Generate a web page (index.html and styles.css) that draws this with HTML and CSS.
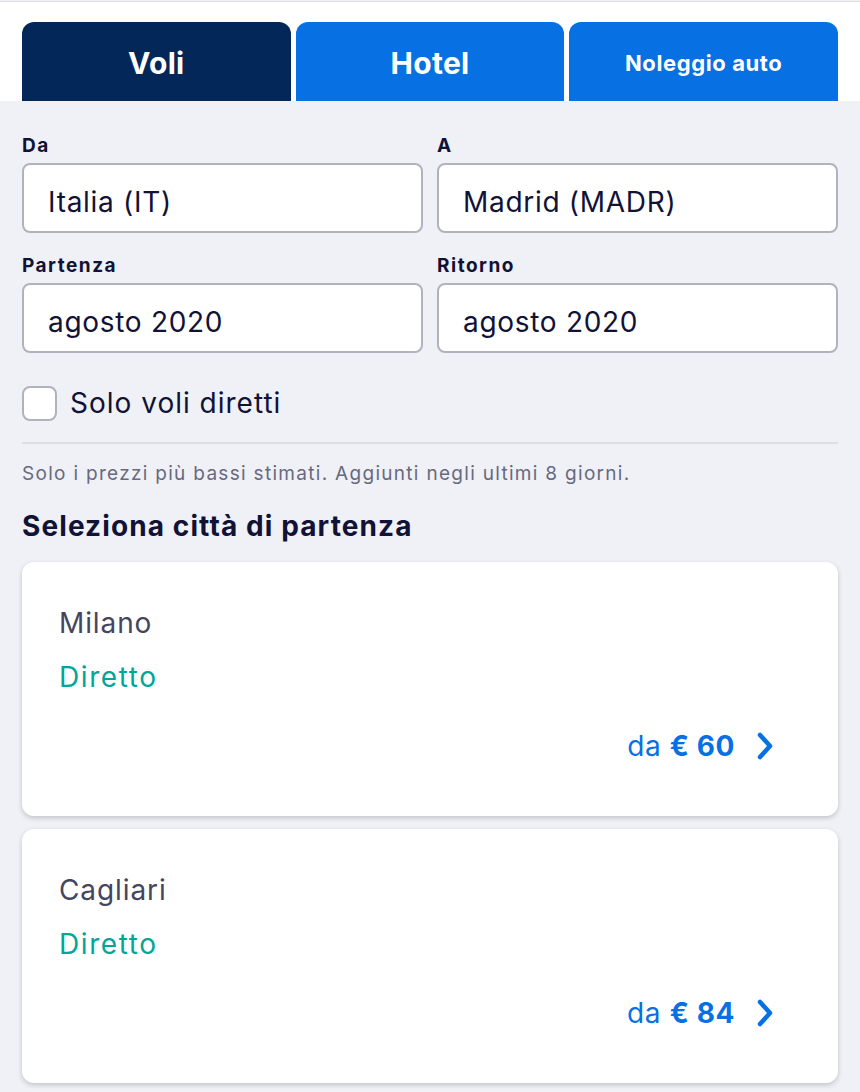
FILE: index.html
```html
<!DOCTYPE html>
<html lang="it">
<head>
<meta charset="utf-8">
<title>Voli</title>
<link rel="stylesheet" href="styles.css">
</head>
<body>
<div class="page">
  <header class="top">
    <nav class="tabs">
      <div class="tab tab-active">Voli</div>
      <div class="tab">Hotel</div>
      <div class="tab tab-small">Noleggio auto</div>
    </nav>
  </header>
  <main class="content">
    <div class="grid">
      <div class="field">
        <div class="label">Da</div>
        <div class="input">Italia (IT)</div>
      </div>
      <div class="field">
        <div class="label">A</div>
        <div class="input">Madrid (MADR)</div>
      </div>
      <div class="field">
        <div class="label">Partenza</div>
        <div class="input">agosto 2020</div>
      </div>
      <div class="field">
        <div class="label">Ritorno</div>
        <div class="input">agosto 2020</div>
      </div>
    </div>
    <label class="check">
      <span class="box"></span>
      <span class="check-text">Solo voli diretti</span>
    </label>
    <hr class="divider">
    <p class="note">Solo i prezzi più bassi stimati. Aggiunti negli ultimi 8 giorni.</p>
    <h2 class="heading">Seleziona città di partenza</h2>
    <div class="cards">
      <div class="card">
        <div class="city">Milano</div>
        <div class="direct">Diretto</div>
        <div class="price-row">
          <span class="price">da <b>€ 60</b></span>
          <svg class="chev" width="20" height="30" viewBox="0 0 20 30"><path d="M5 4 L15 15 L5 26" fill="none" stroke="#0770e3" stroke-width="4.5" stroke-linecap="round" stroke-linejoin="round"/></svg>
        </div>
      </div>
      <div class="card">
        <div class="city">Cagliari</div>
        <div class="direct">Diretto</div>
        <div class="price-row">
          <span class="price">da <b>€ 84</b></span>
          <svg class="chev" width="20" height="30" viewBox="0 0 20 30"><path d="M5 4 L15 15 L5 26" fill="none" stroke="#0770e3" stroke-width="4.5" stroke-linecap="round" stroke-linejoin="round"/></svg>
        </div>
      </div>
    </div>
  </main>
</div>
</body>
</html>
```

FILE: styles.css
```css
* { box-sizing: border-box; }
html, body {
  margin: 0;
  padding: 0;
  background: #eff1f6;
}
body {
  font-family: Inter, "Noto Sans", "Liberation Sans", sans-serif;
  color: #111236;
}
.page {
  width: 860px;
  min-height: 1092px;
  background: #eff1f6;
}
.top {
  background: #ffffff;
  border-top: 1px solid #dddde5;
  margin-top: 1px;
  padding: 20px 22px 0;
}
.tabs {
  display: flex;
  gap: 5px;
}
.tab {
  flex: 1;
  height: 79px;
  border-radius: 12px 12px 0 0;
  background: #0770e3;
  color: #ffffff;
  font-weight: 700;
  font-size: 30px;
  display: flex;
  align-items: center;
  justify-content: center;
  padding-top: 3px;
  letter-spacing: 0.3px;
}
.tab-active {
  background: #042759;
}
.tab-small {
  font-size: 22px;
  letter-spacing: 0.6px;
}
.content {
  padding: 34px 22px 10px;
}
.grid {
  display: grid;
  grid-template-columns: 1fr 1fr;
  column-gap: 14px;
  row-gap: 22px;
}
.label {
  font-size: 19px;
  font-weight: 700;
  line-height: 22px;
  margin-bottom: 6px;
  color: #111236;
  letter-spacing: 1.5px;
}
.input {
  height: 70px;
  border: 2px solid #b2b2bf;
  border-radius: 8px;
  background: #ffffff;
  font-size: 28px;
  line-height: 58px;
  padding-top: 8px;
  padding-left: 24px;
  color: #111236;
  letter-spacing: 0.7px;
}
.check {
  display: flex;
  align-items: center;
  gap: 13px;
  margin-top: 32px;
}
.box {
  width: 35px;
  height: 35px;
  border: 2px solid #b2b2bf;
  border-radius: 8px;
  background: #ffffff;
}
.check-text {
  font-size: 28px;
  line-height: 36px;
  color: #111236;
  letter-spacing: 1px;
}
.divider {
  border: 0;
  height: 2px;
  background: #dddde5;
  margin: 21px 0 0;
}
.note {
  margin: 18px 0 0;
  font-size: 19px;
  line-height: 24px;
  color: #68697f;
  letter-spacing: 1.3px;
}
.heading {
  margin: 23px 0 0;
  font-size: 28px;
  line-height: 34px;
  font-weight: 700;
  color: #111236;
  letter-spacing: 1.1px;
}
.cards {
  margin-top: 19px;
  display: flex;
  flex-direction: column;
  gap: 13px;
}
.card {
  background: #ffffff;
  border-radius: 12px;
  box-shadow: 0 2px 5px rgba(37, 32, 31, 0.22);
  padding: 43px 63px 51px 37px;
  height: 254px;
}
.city {
  font-size: 28px;
  line-height: 36px;
  color: #444560;
  letter-spacing: 0.9px;
}
.direct {
  margin-top: 18px;
  font-size: 28px;
  line-height: 36px;
  color: #00a698;
  letter-spacing: 1.6px;
}
.price-row {
  margin-top: 33px;
  display: flex;
  justify-content: flex-end;
  align-items: center;
  gap: 20px;
  height: 36px;
}
.price {
  font-size: 28px;
  line-height: 36px;
  color: #0770e3;
  letter-spacing: 0.6px;
}
.price b {
  font-weight: 700;
}
.chev {
  display: block;
}
```
